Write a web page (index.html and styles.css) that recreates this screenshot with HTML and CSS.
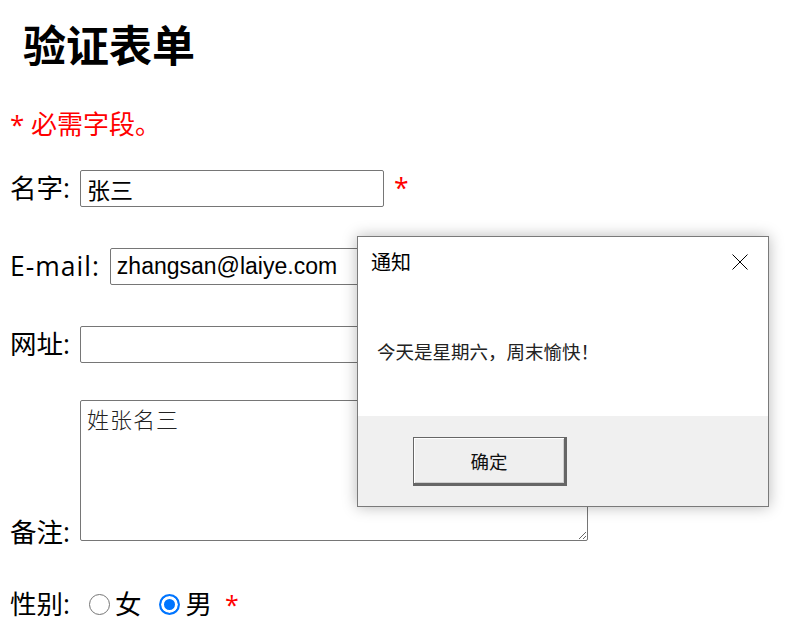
FILE: index.html
```html
<!DOCTYPE html>
<html lang="zh-CN">
<head>
<meta charset="utf-8">
<title>验证表单</title>
<link rel="stylesheet" href="styles.css">
</head>
<body>
<div class="page">
  <h1 class="title">验证表单</h1>
  <p class="note">* 必需字段。</p>
  <form class="form">
    <div class="row row-name">
      <label class="label">名字:</label>
      <input class="field" type="text" value="张三">
      <span class="req">*</span>
    </div>
    <div class="row row-email">
      <label class="label label-latin">E-mail:</label>
      <input class="field" type="text" value="zhangsan@laiye.com">
    </div>
    <div class="row row-url">
      <label class="label">网址:</label>
      <input class="field" type="text" value="">
    </div>
    <div class="row row-memo">
      <label class="label memo-label">备注:</label>
      <textarea class="memo">姓张名三</textarea>
    </div>
    <div class="row row-gender">
      <label class="label">性别:</label>
      <span class="choice"><input class="radio" type="radio" name="sex"><span class="choice-text">女</span></span>
      <span class="choice"><input class="radio" type="radio" name="sex" checked><span class="choice-text">男</span></span>
      <span class="req req-small">*</span>
    </div>
  </form>

  <div class="dialog">
    <div class="dialog-head">
      <span class="dialog-title">通知</span>
      <svg class="dialog-close" width="16" height="16" viewBox="0 0 16 16"><path d="M0.5 0.5 L15.5 15.5 M15.5 0.5 L0.5 15.5" stroke="#000" stroke-width="1" fill="none"/></svg>
    </div>
    <div class="dialog-body">今天是星期六，周末愉快！</div>
    <div class="dialog-foot">
      <button class="dialog-btn" type="button">确定</button>
    </div>
  </div>
</div>
</body>
</html>
```

FILE: styles.css
```css
html, body {
  margin: 0;
  padding: 0;
  background: #fff;
}

.page {
  position: relative;
  width: 795px;
  height: 641px;
  overflow: hidden;
  padding: 0 10px;
  box-sizing: border-box;
  font-family: "Open Sans", "Noto Sans CJK SC", sans-serif;
  color: #000;
}

.title {
  margin: 19px 0 0 13px;
  font-size: 43px;
  line-height: 48px;
  font-weight: bold;
  font-family: "Noto Sans CJK SC", sans-serif;
}

.note {
  margin: 39px 0 0 0;
  font-size: 26px;
  line-height: 36px;
  color: #ff0000;
}

.form {
  margin: 0;
}

.row {
  display: flex;
  align-items: center;
  column-gap: 10px;
  font-size: 26.5px;
  line-height: 37px;
}

.row-name { margin-top: 28px; }
.row-email { margin-top: 41px; }
.row-url { margin-top: 41px; }
.row-memo { margin-top: 37px; align-items: flex-end; }
.row-gender { margin-top: 45px; column-gap: 0; }

.label {
  white-space: nowrap;
}

.label-latin {
  letter-spacing: 1px;
}

.memo-label {
  line-height: 30px;
  margin-bottom: -6px;
}

.field {
  width: 304px;
  height: 37px;
  box-sizing: border-box;
  border: 1px solid #767676;
  border-radius: 2px;
  padding: 0 6px;
  margin: 0;
  font-family: "Liberation Sans", "Noto Sans CJK SC", sans-serif;
  font-size: 23px;
  color: #000;
  background: #fff;
}

.memo {
  width: 508px;
  height: 141px;
  box-sizing: border-box;
  border: 1px solid #767676;
  border-radius: 2px;
  padding: 2px 6px;
  margin: 0;
  font-family: "Noto Sans CJK SC", serif;
  font-weight: 300;
  font-size: 22px;
  line-height: 30px;
  color: #222;
  letter-spacing: 1px;
}

.req {
  color: #ff0000;
}

.req-small {
  margin-left: 13px;
  font-size: 25px;
}

.choice {
  display: inline-flex;
  align-items: center;
}

.label + .choice {
  margin-left: 19px;
}

.choice + .choice {
  margin-left: 18px;
}

.choice-text {
  margin-left: 5px;
}

.radio {
  appearance: none;
  -webkit-appearance: none;
  width: 21px;
  height: 21px;
  margin: 0;
  box-sizing: border-box;
  border: 1px solid #767676;
  border-radius: 50%;
  background: #fff;
}

.radio:checked {
  border: 2px solid #0075ff;
  box-shadow: inset 0 0 0 3px #fff;
  background: #0075ff;
}

/* dialog */
.dialog {
  position: absolute;
  left: 357px;
  top: 236px;
  width: 412px;
  height: 271px;
  box-sizing: border-box;
  border: 1px solid #7a7a7a;
  background: #fff;
  box-shadow: 0 0 14px rgba(0, 0, 0, 0.28);
  display: flex;
  flex-direction: column;
  font-family: "Noto Sans CJK SC", sans-serif;
}

.dialog-head {
  height: 52px;
  display: flex;
  align-items: center;
  justify-content: space-between;
  padding: 0 20px 0 13px;
}

.dialog-title {
  font-size: 20px;
  color: #000;
  margin-top: -4px;
}

.dialog-close {
  width: 16px;
  height: 16px;
  margin-top: -3px;
}

.dialog-body {
  height: 127px;
  box-sizing: border-box;
  padding: 49px 0 0 19px;
  font-size: 18.5px;
  line-height: 27px;
  color: #222;
}

.dialog-foot {
  flex: 1;
  background: #f0f0f0;
  padding: 21px 0 0 55px;
}

.dialog-btn {
  width: 154px;
  height: 49px;
  box-sizing: border-box;
  margin: 0;
  padding: 0;
  border: 1px solid #666;
  border-right-width: 3px;
  border-bottom-width: 3px;
  background: #efefef;
  box-shadow: inset 1px 1px 0 #ffffff, inset -1px -1px 0 #cfcfcf;
  font-family: "Noto Sans CJK SC", sans-serif;
  font-size: 18.5px;
  color: #111;
}
```
